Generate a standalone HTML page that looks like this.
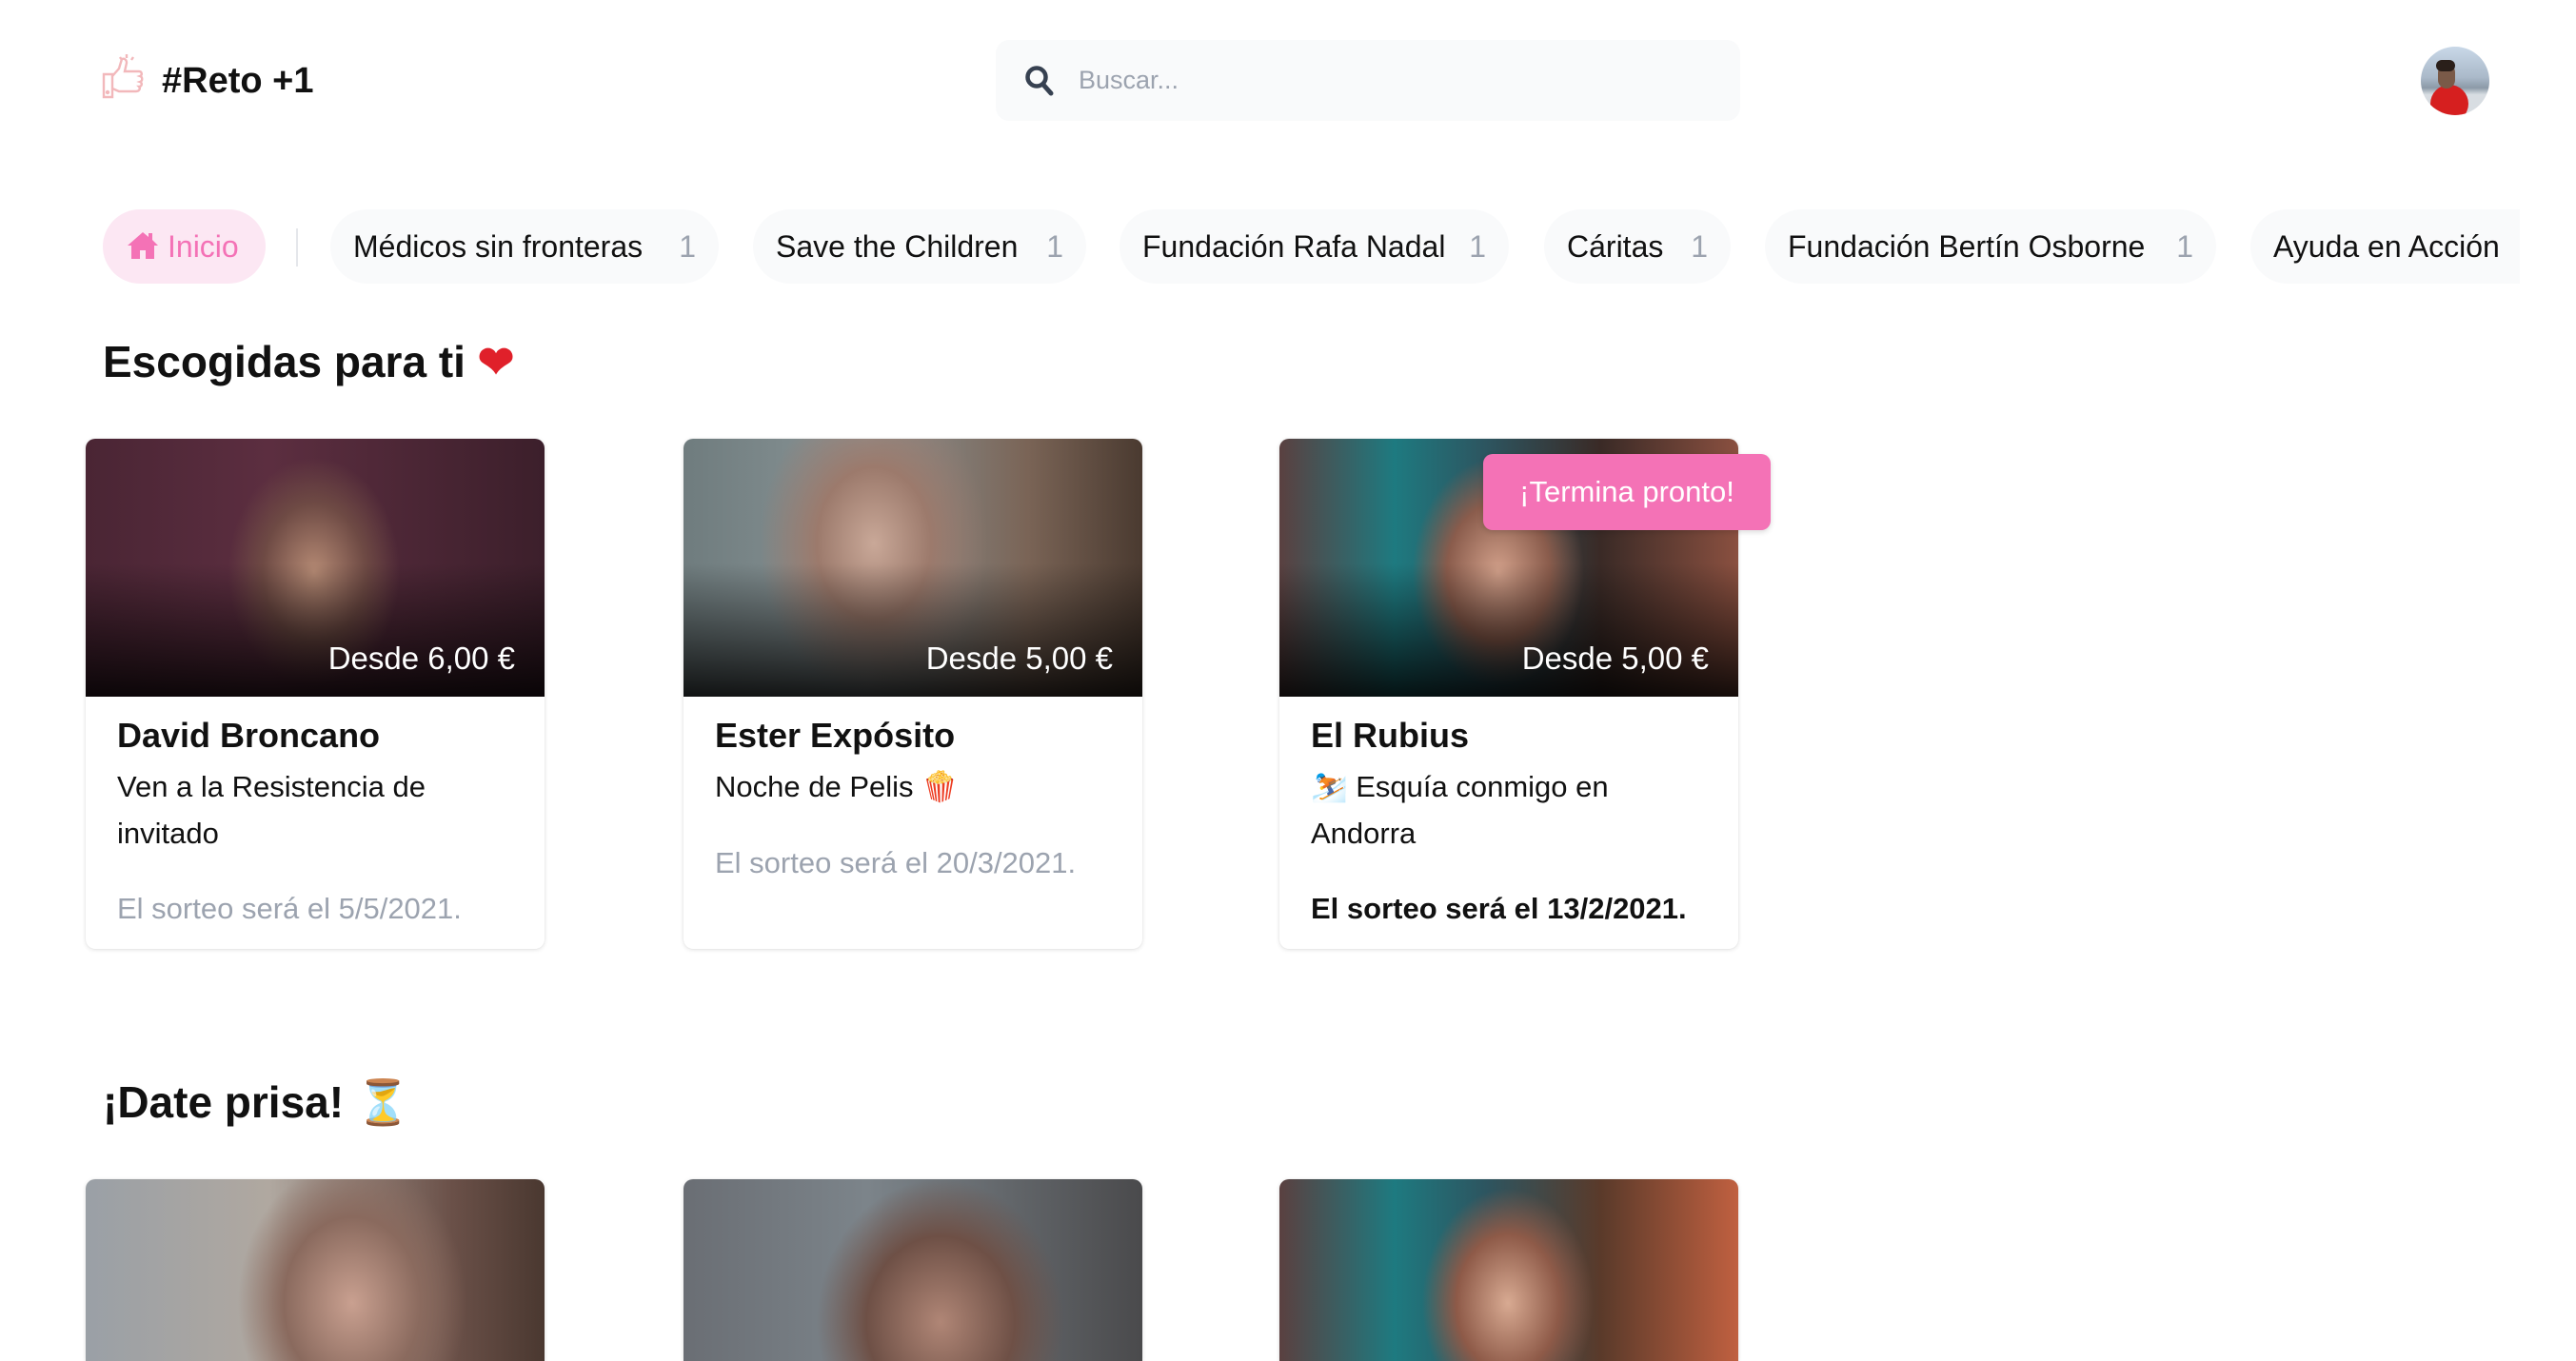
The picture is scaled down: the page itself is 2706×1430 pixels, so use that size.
<!DOCTYPE html>
<html><head><meta charset="utf-8"><style>
*{box-sizing:border-box;margin:0;padding:0}
html,body{width:2706px;height:1430px;overflow:hidden;background:#fff}
body{font-family:"Liberation Sans",sans-serif;color:#111}
#w{position:relative;width:2706px;height:1430px;overflow:hidden}
.abs{position:absolute}
.logo{left:170px;top:62px;font-size:38px;font-weight:bold;line-height:46px}
.search{left:1046px;top:42px;width:782px;height:85px;background:#f9fafb;border-radius:14px}
.search span{position:absolute;left:87px;top:27px;font-size:27px;color:#9ca3af}
.avatar{left:2543px;top:49px;width:72px;height:72px;border-radius:50%;overflow:hidden;background:linear-gradient(180deg,#c9d8e8 0%,#aab9c9 45%,#8c9aa8 60%,#d8dde2 70%)}
.pill{position:absolute;top:220px;height:78px;border-radius:39px;background:#f9fafb;font-size:32px;line-height:78px;padding-left:24px;white-space:nowrap}
.pill .n{color:#9ca3af;position:absolute;right:24px}
.h2{font-size:46px;font-weight:bold;left:108px}
.card{position:absolute;width:482px;height:536px;border-radius:10px;background:#fff;box-shadow:0 1px 5px rgba(0,0,0,.12),0 0 1px rgba(0,0,0,.1);overflow:hidden}
.card.b{height:191px;border-radius:10px 10px 0 0}
.img{height:271px;position:relative}
.img .p{position:absolute;right:31px;top:212px;color:#fff;font-size:33px;z-index:2}
.img:after{content:"";position:absolute;left:0;right:0;bottom:0;height:140px;background:linear-gradient(180deg,rgba(0,0,0,0),rgba(0,0,0,.85))}
.t{position:absolute;left:33px;top:20px;font-size:36px;font-weight:bold}
.d{position:absolute;left:33px;top:70px;font-size:31px;line-height:49px;width:420px}
.dt{position:absolute;left:33px;font-size:31px;color:#9ca3af}
.body{position:relative}
</style></head><body><div id="w">
<svg class="abs" style="left:107px;top:56px" width="47" height="48" viewBox="0 0 47 48" fill="none" stroke="#f2b8bb" stroke-width="2.4">
<path d="M2 22h9v24H2z"/><path d="M11 24l7-8 3-10c3-1 5 1 5 4l-2 9h15c3 0 4 4 1 5 3 1 3 5 0 6 3 1 2 5-1 5 2 2 0 5-3 5H18l-7-3"/>
<path d="M26 1v4M19 4l2 3M33 4l-2 3"/><circle cx="6" cy="41" r="1" fill="#f2b8bb"/></svg>
<div class="abs logo">#Reto +1</div>
<div class="abs search"><svg class="abs" style="left:30px;top:26px" width="32" height="34" viewBox="0 0 32 34"><circle cx="13" cy="13" r="9.5" fill="none" stroke="#374151" stroke-width="4.5"/><path d="M20 21l8 9" stroke="#374151" stroke-width="5" stroke-linecap="round"/></svg><span>Buscar...</span></div>
<div class="abs avatar"><div class="abs" style="left:10px;top:40px;width:40px;height:40px;border-radius:50%;background:#d61f1f"></div><div class="abs" style="left:18px;top:18px;width:18px;height:26px;border-radius:9px;background:#7a5a48"></div><div class="abs" style="left:16px;top:14px;width:20px;height:12px;border-radius:8px;background:#2a1f1a"></div></div>

<div class="pill" style="left:108px;width:171px;background:#fce7f3;color:#f472b6;padding-left:24px"><svg style="vertical-align:-4px;margin-right:8px" width="36" height="32" viewBox="0 0 36 32"><path d="M18 2L2 16h4v14h9v-9h6v9h9V16h4L28 10V3h-4v4z" fill="#f472b6"/></svg>Inicio</div>
<div class="abs" style="left:311px;top:240px;width:2px;height:40px;background:#e5e7eb"></div>
<div class="pill" style="left:347px;width:408px">Médicos sin fronteras<span class="n">1</span></div>
<div class="pill" style="left:791px;width:350px">Save the Children<span class="n">1</span></div>
<div class="pill" style="left:1176px;width:409px">Fundación Rafa Nadal<span class="n">1</span></div>
<div class="pill" style="left:1622px;width:196px">Cáritas<span class="n">1</span></div>
<div class="pill" style="left:1854px;width:474px">Fundación Bertín Osborne<span class="n">1</span></div>
<div class="pill" style="left:2364px;width:283px;border-radius:39px 0 0 39px">Ayuda en Acción</div>

<div class="abs h2" style="top:353px">Escogidas para ti <span style="color:#e0202a">❤</span></div>

<div class="card" style="left:90px;top:461px">
<div class="img" style="background:radial-gradient(ellipse 90px 120px at 240px 140px,#b58a74 0%,#6e4a44 60%,rgba(0,0,0,0) 100%),linear-gradient(90deg,#4a2534,#5c2e40 40%,#3c1f2b)"><span class="p">Desde 6,00 €</span></div>
<div class="body"><div class="t">David Broncano</div><div class="d">Ven a la Resistencia de invitado</div><div class="dt" style="top:205px">El sorteo será el 5/5/2021.</div></div></div>

<div class="card" style="left:718px;top:461px">
<div class="img" style="background:radial-gradient(ellipse 120px 160px at 200px 110px,#c9a898 0%,#9c7a6c 50%,rgba(0,0,0,0) 100%),linear-gradient(90deg,#6f7c7e,#8a9597 40%,#7a6456 75%,#4a3a30)"><span class="p">Desde 5,00 €</span></div>
<div class="body"><div class="t">Ester Expósito</div><div class="d">Noche de Pelis 🍿</div><div class="dt" style="top:157px">El sorteo será el 20/3/2021.</div></div></div>

<div class="card" style="left:1344px;top:461px">
<div class="img" style="background:radial-gradient(ellipse 90px 120px at 230px 140px,#d2a08a 0%,#8a5c4c 60%,rgba(0,0,0,0) 100%),linear-gradient(90deg,#5a4040,#1e7a80 25%,#2d5560 45%,#3a2a26 70%,#8a5040)"><span class="p">Desde 5,00 €</span></div>
<div class="body"><div class="t">El Rubius</div><div class="d">⛷️ Esquía conmigo en Andorra</div><div class="dt" style="top:205px;color:#111;font-weight:bold">El sorteo será el 13/2/2021.</div></div></div>
<div class="abs" style="left:1558px;top:477px;width:302px;height:80px;border-radius:10px;background:#f472b6;color:#fff;font-size:31px;line-height:80px;text-align:center;box-shadow:0 2px 6px rgba(0,0,0,.15)">¡Termina pronto!</div>

<div class="abs h2" style="top:1131px">¡Date prisa! ⏳</div>

<div class="card b" style="left:90px;top:1239px"><div style="height:191px;background:radial-gradient(ellipse 120px 150px at 280px 130px,#c9a090 0%,#8a6a5e 60%,rgba(0,0,0,0) 100%),linear-gradient(90deg,#9aa0a6,#b0a8a0 40%,#6a5048 80%,#4a3830)"></div></div>
<div class="card b" style="left:718px;top:1239px"><div style="height:191px;background:radial-gradient(ellipse 130px 150px at 270px 150px,#b08676 0%,#6e5046 60%,rgba(0,0,0,0) 100%),linear-gradient(90deg,#6a6e74,#7c848a 40%,#4a4a4c)"></div></div>
<div class="card b" style="left:1344px;top:1239px"><div style="height:191px;background:radial-gradient(ellipse 90px 120px at 240px 130px,#d8aa92 0%,#8e5a48 60%,rgba(0,0,0,0) 100%),linear-gradient(90deg,#5a4040,#1e7a80 25%,#2d5560 45%,#5a3a2a 70%,#c06040)"></div></div>
</div></body></html>
